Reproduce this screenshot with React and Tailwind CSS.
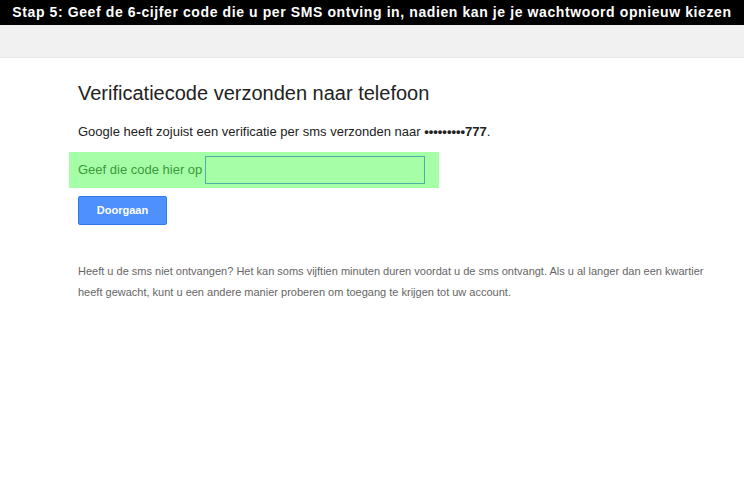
import React from 'react';

export default function App() {
  return (
    <div className="w-[744px] h-[500px] bg-white overflow-hidden font-['Liberation_Sans',Arial,sans-serif]">
      <div className="h-[25px] bg-black text-white font-bold text-[14px] leading-[25px] text-center tracking-[0.6px]">
        Stap 5: Geef de 6-cijfer code die u per SMS ontving in, nadien kan je je wachtwoord opnieuw kiezen
      </div>
      <div className="h-[33px] bg-[#f1f1f1] border-b border-[#e5e5e5]" />
      <div className="pl-[78px] pt-[21px]">
        <h1 className="text-[20px] leading-[28px] text-[#222]">Verificatiecode verzonden naar telefoon</h1>
        <p className="mt-[16px] text-[13px] leading-[18px] text-[#222]">
          Google heeft zojuist een verificatie per sms verzonden naar <span className="font-bold">•••••••••777</span>.
        </p>
        <div className="-ml-[9px] mt-[11px] w-[370px] h-[36px] bg-[#a6fea6] flex items-center pl-[9px]">
          <label className="text-[13px] text-[#3a9a3a]">Geef die code hier op</label>
          <input className="ml-[3px] w-[220px] h-[28px] border border-[#4db0a8] bg-[#a6fea6] outline-none" />
        </div>
        <button className="mt-[8px] w-[89px] h-[29px] rounded-[2px] bg-[#4d90fe] border border-[#3079ed] text-white text-[11px] font-bold">
          Doorgaan
        </button>
        <p className="mt-[36px] w-[640px] text-[11px] leading-[21px] text-[#666]">
          Heeft u de sms niet ontvangen? Het kan soms vijftien minuten duren voordat u de sms ontvangt. Als u al langer dan een kwartier heeft gewacht, kunt u een andere manier proberen om toegang te krijgen tot uw account.
        </p>
      </div>
    </div>
  );
}
